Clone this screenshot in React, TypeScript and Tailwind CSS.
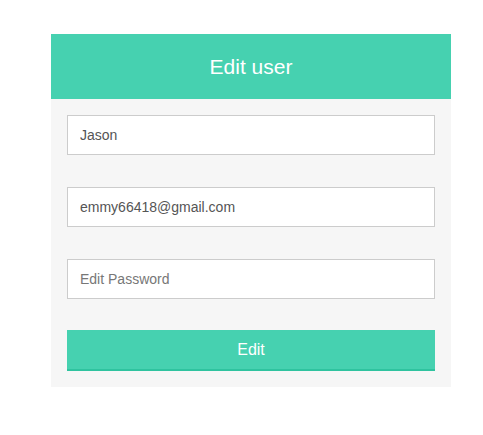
export default function App() {
  return (
    <div className="min-h-screen bg-white pt-[34px] pl-[51px] font-['Liberation_Sans',Arial,sans-serif]">
      <div className="w-[400px]">
        {/* Header */}
        <div className="h-[65px] bg-[#46d1b0] flex items-center justify-center">
          <h1 className="text-[21px] text-white">Edit user</h1>
        </div>

        {/* Form */}
        <form className="bg-[#f6f6f6] p-4 flex flex-col gap-8">
          <input
            type="text"
            defaultValue="Jason"
            className="h-10 w-full bg-white border border-[#cccccc] px-3 text-[14px] text-[#555] outline-none"
          />
          <input
            type="email"
            defaultValue="emmy66418@gmail.com"
            className="h-10 w-full bg-white border border-[#cccccc] px-3 text-[14px] text-[#555] outline-none"
          />
          <input
            type="password"
            placeholder="Edit Password"
            className="h-10 w-full bg-white border border-[#cccccc] px-3 text-[14px] text-[#555] placeholder:text-[#777] outline-none"
          />
          <button
            type="button"
            className="-mt-[1px] h-[41px] w-full bg-[#46d1b0] border-b-2 border-[#2fc39f] text-white text-[16px]"
          >
            Edit
          </button>
        </form>
      </div>
    </div>
  );
}
